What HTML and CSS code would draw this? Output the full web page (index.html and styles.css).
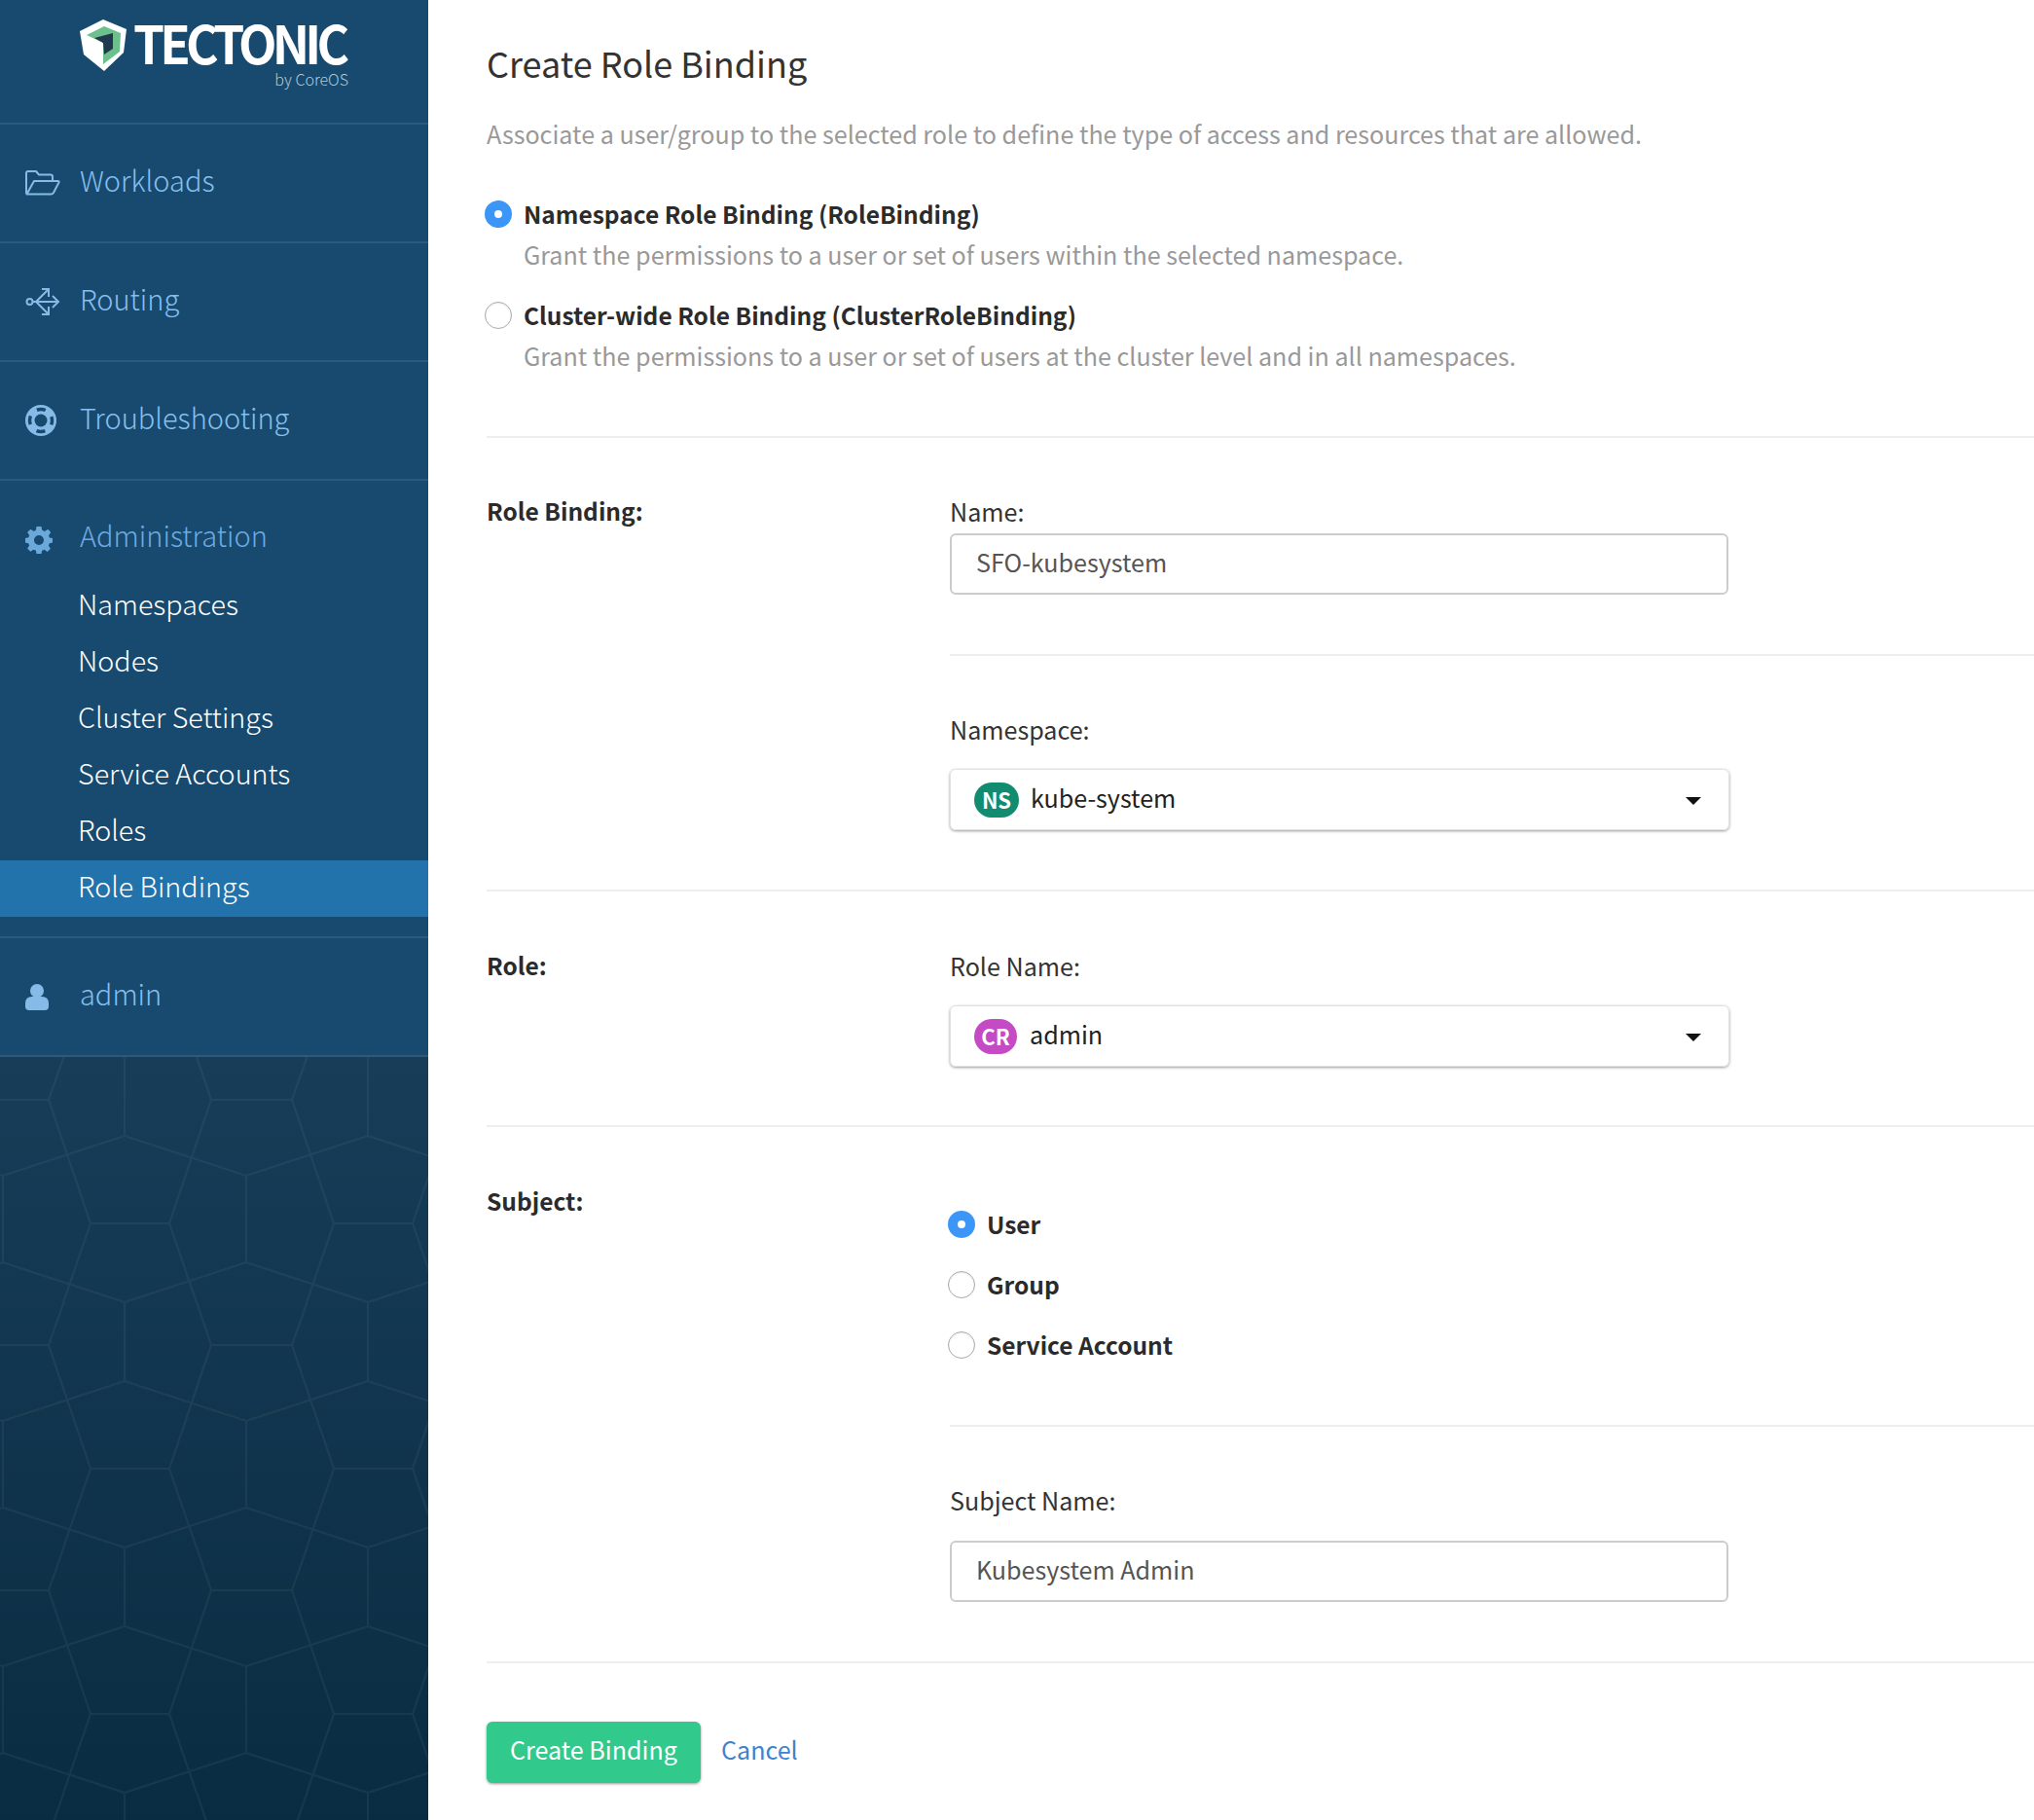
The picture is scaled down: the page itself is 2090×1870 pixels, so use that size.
FILE: index.html
```html
<!DOCTYPE html>
<html lang="en">
<head>
    <meta charset="UTF-8">
    <title>Create Role Binding</title>
    <link rel="stylesheet" href="styles.css">
</head>
<body>
<div class="app">
    <div class="sidebar">
        <div class="logo">
            <div class="logo-row">
                <svg class="logo-mark" viewBox="0 0 48 53">
                    <path d="M0 12 L24 0 L48 10 L45 34 L25 53 L4 36 Z" fill="#fff"/>
                    <path d="M7 16 L25 7 L42 14 L41 33 L24 46 L24 24 Z" fill="#6cc08b"/>
                    <path d="M15 19 L34 14 L34 30 L25 36 L24 24 Z" fill="#22384f"/>
                </svg>
                <span class="logo-name">TECTONIC</span>
            </div>
            <div class="logo-by">by CoreOS</div>
        </div>
        <div class="nav-item">
            <span class="nav-icon">
                <svg width="36" height="26" viewBox="0 0 36 26" fill="none" stroke="#85bbe6" stroke-width="2" stroke-linejoin="round">
                    <path d="M1 24 V3 Q1 1 3 1 H11 L14 4.500 H26 Q28 4.500 28 6.500 V10"/>
                    <path d="M1.500 24.500 L9 11 H33.500 Q35 11 34.500 12.500 L29 23 Q28 24.500 26.500 24.500 Z"/>
                </svg>
            </span>
            <span class="nav-text">Workloads</span>
        </div>
        <div class="nav-item">
            <span class="nav-icon">
                <svg width="36" height="30" viewBox="0 0 36 30" fill="none" stroke="#85bbe6" stroke-width="2">
                    <circle cx="4.500" cy="15" r="3"/>
                    <path d="M8 15 H34 M28 9 L34 15 L28 21 M11 15 L24 2 M17 2 H24 V10 M11 15 L24 28 M17 28 H24 V20"/>
                </svg>
            </span>
            <span class="nav-text">Routing</span>
        </div>
        <div class="nav-item">
            <span class="nav-icon">
                <svg width="32" height="32" viewBox="0 0 32 32">
                    <circle cx="16" cy="16" r="16" fill="#85bbe6"/>
                    <circle cx="16" cy="16" r="11.500" fill="none" stroke="#174a6e" stroke-width="3.500" stroke-dasharray="9 9.060" stroke-dashoffset="4.500"/>
                    <circle cx="16" cy="16" r="6.500" fill="#174a6e"/>
                </svg>
            </span>
            <span class="nav-text">Troubleshooting</span>
        </div>
        <div class="nav-group">
            <div class="nav-head">
                <span class="nav-icon">
                    <svg width="28" height="28" viewBox="0 0 28 28">
                        <path fill-rule="evenodd" fill="#6aa9da" d="M11.500 0 H16.500 L17.300 3.800 L20 4.900 L23.300 2.800 L26.200 6.100 L24 9.300 L24.900 11.600 L28 12 V16.500 L24.800 17.300 L23.900 19.700 L25.900 22.800 L22.700 26 L19.600 23.800 L17.200 24.700 L16.500 28 H11.500 L10.800 24.600 L8.400 23.700 L5.300 25.800 L2.100 22.600 L4.200 19.500 L3.200 17.200 L0 16.500 V12 L3.300 11.300 L4.200 9 L2.100 5.900 L5.300 2.800 L8.500 4.800 L10.800 3.900 Z M14 9 A5 5 0 1 0 14 19 A5 5 0 1 0 14 9 Z"/>
                    </svg>
                </span>
                <span class="nav-text">Administration</span>
            </div>
            <div class="sub-item">Namespaces</div>
            <div class="sub-item">Nodes</div>
            <div class="sub-item">Cluster Settings</div>
            <div class="sub-item">Service Accounts</div>
            <div class="sub-item">Roles</div>
            <div class="sub-item active">Role Bindings</div>
        </div>
        <div class="nav-item">
            <span class="nav-icon">
                <svg width="24" height="27" viewBox="0 0 24 27">
                    <circle cx="12" cy="7" r="7" fill="#85bbe6"/>
                    <path d="M0 23 V20 Q0 13 7 13 H17 Q24 13 24 20 V23 Q24 27 20 27 H4 Q0 27 0 23 Z" fill="#85bbe6"/>
                </svg>
            </span>
            <span class="nav-text">admin</span>
        </div>
        <div class="hexes">
            <svg width="100%" height="100%">
                <defs>
                    <pattern id="hex" width="250" height="252" patternUnits="userSpaceOnUse">
                        <path fill="none" stroke="#ffffff" stroke-opacity="0.05" stroke-width="2"
                              d="M128 0 V81 M3 122 V211 M253 122 V211
                                 M-122 81 L3 122 L128 81 L253 122
                                 M3 -41 L128 0 L253 -41
                                 M-122 252 L3 211 L128 252 L253 211
                                 M-33 44 H50 M217 44 H300 M93 171 H174
                                 M73 -21 L50 44 L93 171 L50 296
                                 M195 -21 L217 44 L174 171 L217 296"/>
                    </pattern>
                </defs>
                <rect width="100%" height="100%" fill="url(#hex)"/>
            </svg>
        </div>
    </div>

    <div class="main">
        <h1 class="title">Create Role Binding</h1>
        <p class="desc">Associate a user/group to the selected role to define the type of access and resources that are allowed.</p>

        <div class="binding-types">
            <div class="radio-row"><span class="radio on"></span><span class="radio-label">Namespace Role Binding (RoleBinding)</span></div>
            <div class="radio-help">Grant the permissions to a user or set of users within the selected namespace.</div>
            <div class="radio-row second"><span class="radio"></span><span class="radio-label">Cluster-wide Role Binding (ClusterRoleBinding)</span></div>
            <div class="radio-help">Grant the permissions to a user or set of users at the cluster level and in all namespaces.</div>
        </div>

        <div class="section first">
            <div class="section-name">Role Binding:</div>
            <div class="section-body">
                <div class="field-label">Name:</div>
                <div class="text-input">SFO-kubesystem</div>
                <div class="inner-rule"></div>
                <div class="field-label">Namespace:</div>
                <div class="dropdown">
                    <span class="badge ns">NS</span><span class="dropdown-value">kube-system</span><span class="caret"></span>
                </div>
            </div>
        </div>

        <div class="section">
            <div class="section-name">Role:</div>
            <div class="section-body">
                <div class="field-label">Role Name:</div>
                <div class="dropdown">
                    <span class="badge cr">CR</span><span class="dropdown-value">admin</span><span class="caret"></span>
                </div>
            </div>
        </div>

        <div class="section last">
            <div class="section-name">Subject:</div>
            <div class="section-body subject">
                <div class="radio-row"><span class="radio on"></span><span class="radio-label">User</span></div>
                <div class="radio-row"><span class="radio"></span><span class="radio-label">Group</span></div>
                <div class="radio-row"><span class="radio"></span><span class="radio-label">Service Account</span></div>
                <div class="inner-rule"></div>
                <div class="field-label">Subject Name:</div>
                <div class="text-input">Kubesystem Admin</div>
            </div>
        </div>

        <div class="actions">
            <button class="btn-create">Create Binding</button>
            <a class="cancel">Cancel</a>
        </div>
    </div>
</div>
</body>
</html>
```

FILE: styles.css
```css
body {
    margin: 0;
    background-color: #fff;
    color: #333;
    font-family: "Noto Sans CJK SC", "Noto Sans", sans-serif;
    font-size: 25.100px;
    line-height: 36px;
}

.app {
    display: flex;
    height: 1870px;
    overflow: hidden;
}

/* sidebar */
.sidebar {
    width: 440px;
    flex: none;
    display: flex;
    flex-direction: column;
    background-color: #174a6e;
}

.logo {
    height: 107px;
    flex: none;
    padding: 19px 0 0 82px;
    border-bottom: 2px solid #2c5a7c;
}

.logo-row {
    display: flex;
    align-items: center;
    height: 54px;
}

.logo-mark {
    width: 48px;
    height: 53px;
    flex: none;
    margin-right: 7px;
}

.logo-name {
    display: inline-block;
    margin-top: -6px;
    color: #fff;
    font-size: 54px;
    font-weight: 700;
    letter-spacing: -5px;
    line-height: 48px;
    transform: scaleX(.95);
    transform-origin: left center;
}

.logo-by {
    width: 276px;
    text-align: right;
    color: #b4c8d8;
    font-size: 16px;
    font-weight: 300;
    line-height: 16px;
}

.nav-item {
    height: 120px;
    flex: none;
    display: flex;
    align-items: center;
    padding-left: 26px;
    border-bottom: 2px solid #2c5a7c;
}

.nav-icon {
    width: 56px;
    flex: none;
    display: flex;
    align-items: center;
}

.nav-text {
    color: #85bfee;
    font-size: 29px;
    font-weight: 300;
    margin-top: -8px;
}

.nav-group {
    flex: none;
    padding-bottom: 20px;
    border-bottom: 2px solid #2c5a7c;
}

.nav-head {
    height: 61px;
    padding: 39px 0 0 26px;
    display: flex;
    align-items: flex-start;
}

.nav-head .nav-icon {
    height: 36px;
    margin-top: 4px;
}

.nav-head .nav-text {
    color: #6eaae0;
    margin-top: -2px;
}

.sub-item {
    height: 58px;
    padding-left: 80px;
    color: #fff;
    font-size: 28.700px;
    font-weight: 300;
    line-height: 52px;
}

.sub-item.active {
    background-color: #2272ac;
}

.hexes {
    flex: 1;
    background-image: linear-gradient(#173d58, #0a2c42);
    min-height: 0;
}

.hexes svg {
    display: block;
}

/* main column */
.main {
    flex: 1;
    padding: 44px 0 0 60px;
}

.title {
    margin: 0;
    font-size: 36px;
    font-weight: 400;
    line-height: 40px;
    color: #333;
}

.desc {
    margin: 35px 0 0;
    color: #999;
}

.binding-types {
    margin-top: 47px;
    padding-bottom: 65px;
    border-bottom: 2px solid #eee;
}

.radio-row {
    display: flex;
    align-items: center;
}

.radio-row.second {
    margin-top: 27px;
}

.radio {
    box-sizing: border-box;
    width: 28px;
    height: 28px;
    flex: none;
    margin: 0 12px 0 -2px;
    border: 1px solid #aaa;
    border-radius: 50%;
    background-color: #fff;
    box-shadow: inset 0 1px 2px rgba(0,0,0,.08);
}

.radio.on {
    border: 10px solid #3c96f7;
    box-shadow: none;
}

.radio-label {
    font-weight: 700;
    font-size: 24.500px;
    color: #2b2b2b;
}

.radio-help {
    margin: 5px 0 0 38px;
    color: #999;
}

.section {
    display: flex;
    padding: 58px 0 60px;
    border-bottom: 2px solid #eee;
}

.section.first {
    padding-top: 57px;
    padding-bottom: 61px;
}

.section.last {
    padding-bottom: 61px;
}

.section-name {
    width: 476px;
    flex: none;
    font-weight: 700;
    font-size: 24.500px;
    color: #2b2b2b;
}

.section-body {
    flex: 1;
    min-width: 0;
}

.field-label {
    color: #333;
}

.text-input {
    box-sizing: border-box;
    width: 800px;
    height: 63px;
    margin-top: 5px;
    padding: 0 25px;
    border: 2px solid #ccc;
    border-radius: 6px;
    color: #555;
    line-height: 55px;
}

.inner-rule {
    height: 2px;
    margin: 61px 0 57px;
    background-color: #eee;
}

.dropdown {
    box-sizing: border-box;
    width: 801px;
    height: 63px;
    margin-top: 23px;
    padding: 0 20px 0 24px;
    display: flex;
    align-items: center;
    border-radius: 6px;
    border: 1px solid #e2e2e2;
    box-shadow: 0 1px 3px rgba(0,0,0,.4);
    color: #222;
}

.badge {
    width: 46px;
    height: 36px;
    flex: none;
    border-radius: 18px;
    color: #fff;
    font-size: 22px;
    font-weight: 700;
    line-height: 34px;
    text-align: center;
}

.badge.ns {
    background-color: #128c70;
}

.badge.cr {
    width: 44px;
    margin-right: 1px;
    background-color: #c44bc4;
}

.dropdown-value {
    flex: 1;
    margin-left: 12px;
    margin-top: -5px;
}

.caret {
    width: 0;
    height: 0;
    margin: 3px 8px 0 0;
    border-left: 8px solid transparent;
    border-right: 8px solid transparent;
    border-top: 8px solid #111;
}

.subject {
    padding-top: 24px;
}

.subject .radio-row {
    margin-bottom: 26px;
}

.subject .radio-row:nth-child(3) {
    margin-bottom: 0;
}

.subject .inner-rule {
    margin-top: 64px;
    margin-bottom: 57px;
}

.subject .text-input {
    margin-top: 24px;
}

.actions {
    display: flex;
    align-items: center;
    margin-top: 60px;
}

.btn-create {
    width: 220px;
    height: 63px;
    padding: 0 0 8px;
    border: 0;
    border-radius: 6px;
    background-color: #32c98d;
    color: #fff;
    font-family: inherit;
    font-size: 25.100px;
    box-shadow: 0 1px 3px rgba(0,0,0,.4);
}

.cancel {
    margin-left: 21px;
    margin-top: -7px;
    color: #3f83cc;
}
```
